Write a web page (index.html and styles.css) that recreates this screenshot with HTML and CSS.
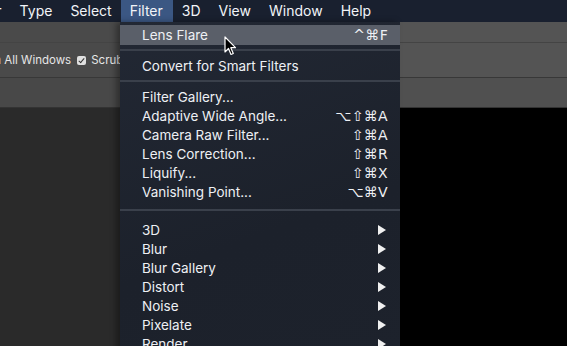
FILE: index.html
```html
<!DOCTYPE html>
<html lang="en">
<head>
    <meta charset="UTF-8">
    <title>Filter menu</title>
    <link rel="stylesheet" href="styles.css">
</head>
<body>
    <div class="menubar">
        <span class="menu-title first">Layer</span>
        <span class="menu-title">Type</span>
        <span class="menu-title">Select</span>
        <span class="menu-title active">Filter</span>
        <span class="menu-title">3D</span>
        <span class="menu-title">View</span>
        <span class="menu-title">Window</span>
        <span class="menu-title">Help</span>
    </div>

    <div class="workspace">
        <!-- Barra opzioni dello strumento zoom -->
        <div class="options-bar">
            <div class="options-top"></div>
            <div class="options-main">
                <label class="option cut">Zoom All Windows</label>
                <label class="option">
                    <span class="check"></span>Scrubby Zoom
                </label>
            </div>
        </div>
        <div class="tabs-bar"></div>
        <div class="canvas-row">
            <div class="pasteboard"></div>
            <div class="document"></div>
        </div>
    </div>

    <!-- Menu Filter aperto -->
    <div class="dropdown">
        <div class="item hover"><span>Lens Flare</span><span class="keys">^⌘F</span></div>
        <div class="sep"></div>
        <div class="item"><span>Convert for Smart Filters</span></div>
        <div class="sep"></div>
        <div class="item"><span>Filter Gallery...</span></div>
        <div class="item"><span>Adaptive Wide Angle...</span><span class="keys">⌥⇧⌘A</span></div>
        <div class="item"><span>Camera Raw Filter...</span><span class="keys">⇧⌘A</span></div>
        <div class="item"><span>Lens Correction...</span><span class="keys">⇧⌘R</span></div>
        <div class="item"><span>Liquify...</span><span class="keys">⇧⌘X</span></div>
        <div class="item"><span>Vanishing Point...</span><span class="keys">⌥⌘V</span></div>
        <div class="sep big"></div>
        <div class="item"><span>3D</span><span class="arrow"></span></div>
        <div class="item"><span>Blur</span><span class="arrow"></span></div>
        <div class="item"><span>Blur Gallery</span><span class="arrow"></span></div>
        <div class="item"><span>Distort</span><span class="arrow"></span></div>
        <div class="item"><span>Noise</span><span class="arrow"></span></div>
        <div class="item"><span>Pixelate</span><span class="arrow"></span></div>
        <div class="item"><span>Render</span><span class="arrow"></span></div>
    </div>

    <svg class="cursor" width="14" height="21" viewBox="0 0 14 21">
        <path d="M1 1 L1 16 L4.5 12.5 L7 18.5 L9.3 17.5 L6.8 11.7 L11.5 11.7 Z" fill="#000" stroke="#fff" stroke-width="1.2" stroke-linejoin="round"/>
    </svg>
</body>
</html>
```

FILE: styles.css
```css
/* Generale */
body {
    margin: 0;
    width: 567px;
    height: 346px;
    overflow: hidden;
    background-color: #000;
    font-family: Inter, "Noto Sans", sans-serif;
    position: relative;
}

/* Barra dei menu */
.menubar {
    display: flex;
    height: 22px;
    background-color: #19202f;
    color: #f2f4f8;
    font-size: 14px;
    line-height: 22px;
    white-space: nowrap;
}

.menu-title {
    padding: 0 9px;
}

.menu-title.first {
    margin-left: -44px;
}

.menu-title.active {
    background-color: #3b5783;
    padding-right: 10px;
}

/* Area di lavoro */
.workspace {
    display: flex;
    flex-direction: column;
    height: 324px;
}

.options-bar {
    height: 55px;
    background: linear-gradient(to right, #4a4a4a 0, #4a4a4a 120px, #545454 400px);
    border-bottom: 1px solid #383838;
    display: flex;
    flex-direction: column;
}

.options-top {
    height: 20px;
    border-bottom: 1px solid #444;
}

.options-main {
    display: flex;
    align-items: center;
    gap: 6px;
    flex: 1;
    font-family: Inter, "Noto Sans", sans-serif;
    font-size: 11.5px;
    color: #e6e6e6;
    white-space: nowrap;
}

.option {
    display: flex;
    align-items: center;
    gap: 5px;
}

.option.cut {
    margin-left: -30px;
}

.check {
    width: 9px;
    height: 9px;
    border-radius: 2px;
    background-color: #e0e0e0;
    position: relative;
}

.check::after {
    content: "";
    position: absolute;
    left: 3px;
    top: 1px;
    width: 2px;
    height: 5px;
    border: solid #333;
    border-width: 0 1.5px 1.5px 0;
    transform: rotate(40deg);
}

.tabs-bar {
    height: 29px;
    background: linear-gradient(to right, #484848 0, #484848 120px, #505050 400px);
    border-bottom: 1px solid #333;
}

.canvas-row {
    flex: 1;
    display: flex;
}

.pasteboard {
    width: 260px;
    background-color: #2a2a2a;
}

.document {
    flex: 1;
    background-color: #000;
}

/* Menu a discesa */
.dropdown {
    position: absolute;
    left: 120px;
    top: 22px;
    width: 280px;
    height: 340px;
    padding-top: 3px;
    box-sizing: border-box;
    background: linear-gradient(160deg, #222834 0%, #1c212b 60%, #1d222c 100%);
    box-shadow: -4px 0 6px rgba(0, 0, 0, 0.35);
    color: #eef0f4;
    font-size: 13.5px;
}

.item {
    display: flex;
    align-items: center;
    justify-content: space-between;
    height: 19px;
    padding: 0 12px 0 22px;
    white-space: nowrap;
}

.item.hover {
    height: 20px;
    margin-bottom: -1px;
    background-color: #5a5f69;
}

.keys {
    font-family: "DejaVu Sans", sans-serif;
    font-size: 14px;
    letter-spacing: 0.3px;
}

.arrow {
    width: 0;
    height: 0;
    margin-right: 2px;
    border-left: 8px solid #f0f0f0;
    border-top: 5px solid transparent;
    border-bottom: 5px solid transparent;
}

.sep {
    height: 12px;
    position: relative;
}

.sep::after {
    content: "";
    position: absolute;
    left: 0;
    right: 0;
    top: 5px;
    height: 2px;
    background-color: #3a404b;
}

.sep.big {
    height: 19px;
}

.sep.big::after {
    top: 8px;
}

/* Puntatore */
.cursor {
    position: absolute;
    left: 224px;
    top: 36px;
}
```
